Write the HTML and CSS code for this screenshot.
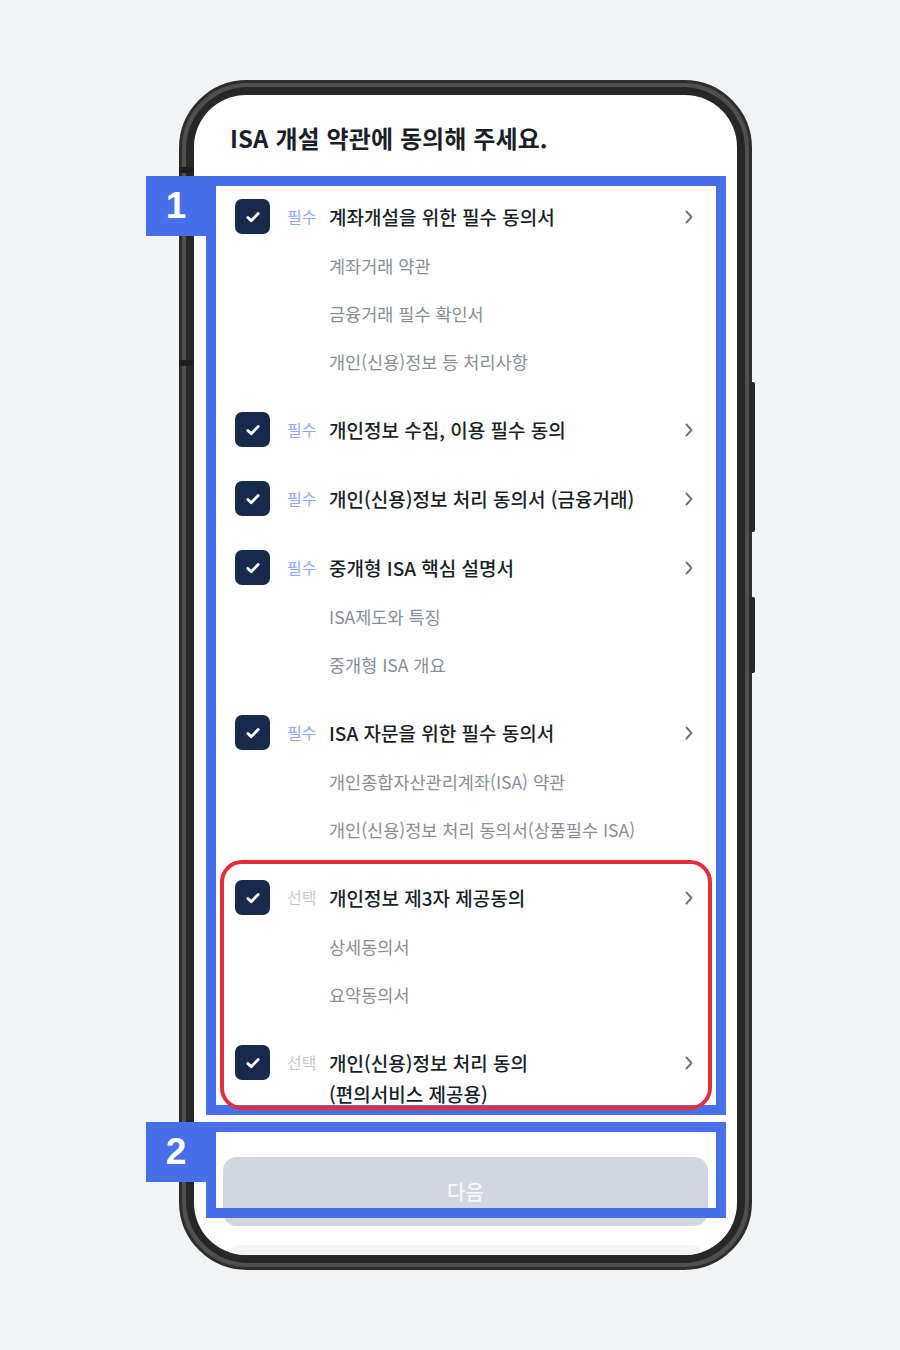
FILE: index.html
```html
<!DOCTYPE html>
<html lang="ko">
<head>
  <meta charset="UTF-8">
  <meta name="viewport" content="width=device-width, initial-scale=1.0">
  <title>ISA 개설 약관 동의</title>
  <link rel="stylesheet" href="styles.css">
</head>
<body>
  <div class="page">
    <div class="phone">
      <span class="side-btn side-btn-top"></span>
      <span class="side-btn side-btn-bottom"></span>
      <span class="band band-1"></span>
      <span class="band band-2"></span>
      <div class="bezel">
        <div class="screen">
          <h1 class="page-title">ISA 개설 약관에 동의해 주세요.</h1>

          <ul class="agree-list">
            <li class="agree-group">
              <div class="agree-row">
                <span class="check"><svg viewBox="0 0 16 16" width="16" height="16"><path d="M2.8 8.4l3.4 3.3L13.2 4.6" fill="none" stroke="#fff" stroke-width="2.8" stroke-linecap="round" stroke-linejoin="round"/></svg></span>
                <span class="tag tag-required">필수</span>
                <span class="agree-title">계좌개설을 위한 필수 동의서</span>
                <svg class="chevron" viewBox="0 0 8 14" width="8" height="14"><path d="M1.5 1.5L6.5 7l-5 5.5" fill="none" stroke="#6b7684" stroke-width="1.9" stroke-linecap="round" stroke-linejoin="round"/></svg>
              </div>
              <div class="sub-row">계좌거래 약관</div>
              <div class="sub-row">금융거래 필수 확인서</div>
              <div class="sub-row">개인(신용)정보 등 처리사항</div>
            </li>

            <li class="agree-group">
              <div class="agree-row">
                <span class="check"><svg viewBox="0 0 16 16" width="16" height="16"><path d="M2.8 8.4l3.4 3.3L13.2 4.6" fill="none" stroke="#fff" stroke-width="2.8" stroke-linecap="round" stroke-linejoin="round"/></svg></span>
                <span class="tag tag-required">필수</span>
                <span class="agree-title">개인정보 수집, 이용 필수 동의</span>
                <svg class="chevron" viewBox="0 0 8 14" width="8" height="14"><path d="M1.5 1.5L6.5 7l-5 5.5" fill="none" stroke="#6b7684" stroke-width="1.9" stroke-linecap="round" stroke-linejoin="round"/></svg>
              </div>
            </li>

            <li class="agree-group">
              <div class="agree-row">
                <span class="check"><svg viewBox="0 0 16 16" width="16" height="16"><path d="M2.8 8.4l3.4 3.3L13.2 4.6" fill="none" stroke="#fff" stroke-width="2.8" stroke-linecap="round" stroke-linejoin="round"/></svg></span>
                <span class="tag tag-required">필수</span>
                <span class="agree-title">개인(신용)정보 처리 동의서 (금융거래)</span>
                <svg class="chevron" viewBox="0 0 8 14" width="8" height="14"><path d="M1.5 1.5L6.5 7l-5 5.5" fill="none" stroke="#6b7684" stroke-width="1.9" stroke-linecap="round" stroke-linejoin="round"/></svg>
              </div>
            </li>

            <li class="agree-group">
              <div class="agree-row">
                <span class="check"><svg viewBox="0 0 16 16" width="16" height="16"><path d="M2.8 8.4l3.4 3.3L13.2 4.6" fill="none" stroke="#fff" stroke-width="2.8" stroke-linecap="round" stroke-linejoin="round"/></svg></span>
                <span class="tag tag-required">필수</span>
                <span class="agree-title">중개형 ISA 핵심 설명서</span>
                <svg class="chevron" viewBox="0 0 8 14" width="8" height="14"><path d="M1.5 1.5L6.5 7l-5 5.5" fill="none" stroke="#6b7684" stroke-width="1.9" stroke-linecap="round" stroke-linejoin="round"/></svg>
              </div>
              <div class="sub-row">ISA제도와 특징</div>
              <div class="sub-row">중개형 ISA 개요</div>
            </li>

            <li class="agree-group">
              <div class="agree-row">
                <span class="check"><svg viewBox="0 0 16 16" width="16" height="16"><path d="M2.8 8.4l3.4 3.3L13.2 4.6" fill="none" stroke="#fff" stroke-width="2.8" stroke-linecap="round" stroke-linejoin="round"/></svg></span>
                <span class="tag tag-required">필수</span>
                <span class="agree-title">ISA 자문을 위한 필수 동의서</span>
                <svg class="chevron" viewBox="0 0 8 14" width="8" height="14"><path d="M1.5 1.5L6.5 7l-5 5.5" fill="none" stroke="#6b7684" stroke-width="1.9" stroke-linecap="round" stroke-linejoin="round"/></svg>
              </div>
              <div class="sub-row">개인종합자산관리계좌(ISA) 약관</div>
              <div class="sub-row">개인(신용)정보 처리 동의서(상품필수 ISA)</div>
            </li>

            <li class="agree-group">
              <div class="agree-row">
                <span class="check"><svg viewBox="0 0 16 16" width="16" height="16"><path d="M2.8 8.4l3.4 3.3L13.2 4.6" fill="none" stroke="#fff" stroke-width="2.8" stroke-linecap="round" stroke-linejoin="round"/></svg></span>
                <span class="tag tag-optional">선택</span>
                <span class="agree-title">개인정보 제3자 제공동의</span>
                <svg class="chevron" viewBox="0 0 8 14" width="8" height="14"><path d="M1.5 1.5L6.5 7l-5 5.5" fill="none" stroke="#6b7684" stroke-width="1.9" stroke-linecap="round" stroke-linejoin="round"/></svg>
              </div>
              <div class="sub-row">상세동의서</div>
              <div class="sub-row">요약동의서</div>
            </li>

            <li class="agree-group">
              <div class="agree-row">
                <span class="check"><svg viewBox="0 0 16 16" width="16" height="16"><path d="M2.8 8.4l3.4 3.3L13.2 4.6" fill="none" stroke="#fff" stroke-width="2.8" stroke-linecap="round" stroke-linejoin="round"/></svg></span>
                <span class="tag tag-optional">선택</span>
                <span class="agree-title">개인(신용)정보 처리 동의<br>(편의서비스 제공용)</span>
                <svg class="chevron" viewBox="0 0 8 14" width="8" height="14"><path d="M1.5 1.5L6.5 7l-5 5.5" fill="none" stroke="#6b7684" stroke-width="1.9" stroke-linecap="round" stroke-linejoin="round"/></svg>
              </div>
            </li>
          </ul>

          <button type="button" class="next-button">다음</button>
          <div class="bottom-strip"></div>
        </div>
      </div>
    </div>

    <!-- 가이드 표시 -->
    <div class="guide guide-1"></div>
    <div class="guide-num guide-num-1">1</div>
    <div class="guide guide-2"></div>
    <div class="guide-num guide-num-2">2</div>
    <div class="highlight"></div>
  </div>
</body>
</html>
```

FILE: styles.css
```css
:root {
  --page-bg: #f2f3f5;
  --frame-dark: #272727;
  --frame-mid: #4f4f4f;
  --navy: #182a4c;
  --text: #191f28;
  --sub-text: #878e99;
  --tag-blue: #8fa8f7;
  --tag-gray: #c3c8d0;
  --guide-blue: #486fea;
  --guide-red: #e0313a;
  --font: "Noto Sans CJK KR", "Noto Sans", sans-serif;
}

* {
  box-sizing: border-box;
}

body {
  margin: 0;
  background: var(--page-bg);
  font-family: var(--font);
  color: var(--text);
}

.page {
  position: relative;
  width: 900px;
  height: 1350px;
  padding: 80px 0 0 179px;
}

/* 폰 프레임 */
.phone {
  position: relative;
  width: 573px;
  height: 1190px;
  border: 3px solid #2d2d2d;
  border-radius: 68px;
  background: var(--frame-mid);
  padding: 4px;
}

.bezel {
  height: 100%;
  border-radius: 62px;
  background: var(--frame-dark);
  padding: 8px;
}

.screen {
  height: 100%;
  border-radius: 52px;
  background: #fff;
  overflow: hidden;
  display: flex;
  flex-direction: column;
}

.screen > * {
  flex: none;
}

.side-btn {
  position: absolute;
  right: -6px;
  width: 5px;
  background: #262626;
  border-radius: 0 2px 2px 0;
}

.side-btn-top {
  top: 299px;
  height: 150px;
}

.side-btn-bottom {
  top: 514px;
  height: 76px;
}

.band {
  position: absolute;
  left: -3px;
  width: 15px;
  height: 6px;
  background: #1f1f1f;
}

.band-1 { top: 84px; }
.band-2 { top: 277px; }

/* 화면 내용 */
.page-title {
  margin: 0;
  padding: 27px 0 0 36px;
  font-size: 24px;
  line-height: 32px;
  font-weight: 700;
  letter-spacing: 0.1px;
}

.agree-list {
  list-style: none;
  margin: 38px 0 0;
  padding: 0 44px 0 41px;
  display: flex;
  flex-direction: column;
  gap: 19px;
}

.agree-row {
  display: flex;
  align-items: flex-start;
  padding: 7px 0 8px;
}

.check {
  flex: none;
  width: 35px;
  height: 35px;
  border-radius: 7px;
  background: var(--navy);
  display: flex;
  align-items: center;
  justify-content: center;
}

.tag {
  flex: none;
  width: 42px;
  margin-left: 17px;
  padding-top: 2px;
  font-size: 16px;
  line-height: 31px;
}

.tag-required { color: var(--tag-blue); }
.tag-optional { color: var(--tag-gray); }

.agree-title {
  flex: 1;
  padding-top: 2px;
  font-size: 19px;
  line-height: 31px;
  font-weight: 500;
}

.chevron {
  flex: none;
  margin-top: 11px;
}

.sub-row {
  height: 48px;
  line-height: 48px;
  padding-left: 94px;
  font-size: 17.5px;
  color: var(--sub-text);
}

.next-button {
  margin: 40px 29px 0;
  height: 69px;
  border: none;
  border-radius: 14px;
  background: #d1d6e0;
  color: #f4f6f9;
  font-family: var(--font);
  font-size: 20px;
  font-weight: 500;
}

.bottom-strip {
  margin: 19px 34px 0;
  height: 30px;
  border-radius: 12px 12px 0 0;
  background: #f2f4f6;
}

/* 가이드 표시 */
.guide {
  position: absolute;
  left: 206px;
  width: 520px;
  border: 10px solid var(--guide-blue);
}

.guide-1 {
  top: 176px;
  height: 939px;
}

.guide-2 {
  top: 1122px;
  height: 96px;
}

.guide-num {
  position: absolute;
  left: 146px;
  width: 62px;
  height: 60px;
  background: var(--guide-blue);
  color: #fff;
  font-family: "Liberation Sans", "DejaVu Sans", sans-serif;
  font-size: 37px;
  font-weight: 700;
  line-height: 60px;
  text-align: center;
  padding-right: 2px;
}

.guide-num-1 { top: 176px; }
.guide-num-2 { top: 1122px; }

.highlight {
  position: absolute;
  left: 220px;
  top: 860px;
  width: 492px;
  height: 250px;
  border: 4px solid var(--guide-red);
  border-radius: 22px;
}
```
